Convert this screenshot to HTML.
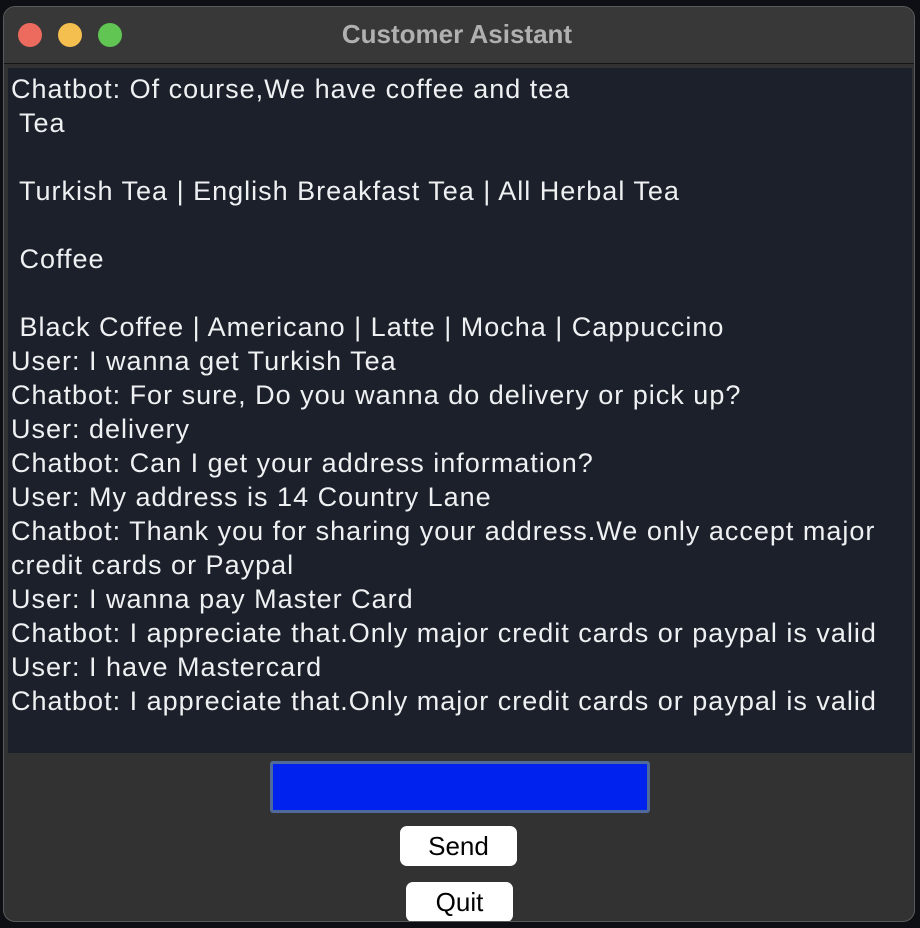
<!DOCTYPE html>
<html><head><style>
html,body{margin:0;padding:0;width:920px;height:928px;background:#0d0f14;overflow:hidden}
.win{position:absolute;left:3px;top:6px;width:912px;height:916px;background:#323232;border:1px solid #5a5a5a;border-radius:12px;overflow:hidden;box-sizing:border-box}
.tb{position:absolute;left:0;top:0;right:0;height:56px;background:#383838;border-bottom:1px solid #151515}
.dot{position:absolute;top:16px;width:24px;height:24px;border-radius:50%}
.title{position:absolute;left:0;right:0;top:12px;text-align:center;color:#b0b0b0;font:bold 26px "Liberation Sans",sans-serif;padding-right:4px}
.ta{position:absolute;left:4px;top:61px;width:904px;height:685px;background:#1b202a;color:#eef0f2;font:27px/34px "Liberation Sans",sans-serif;letter-spacing:1px;padding:4px 3px;box-sizing:border-box;white-space:pre}
.inp{position:absolute;left:266px;top:754px;width:380px;height:52px;background:#0022ef;border:3px solid #4f6a9a;border-radius:3px;box-sizing:border-box}
.btn{position:absolute;background:#fff;border-radius:7px;color:#000;font:26px/40px "Liberation Sans",sans-serif;text-align:center;height:40px}
</style></head><body>
<div class="win">
<div class="tb">
<div class="dot" style="left:14px;background:#ec6a5e"></div>
<div class="dot" style="left:54px;background:#f4bf4f"></div>
<div class="dot" style="left:94px;background:#61c554"></div>
<div class="title">Customer Asistant</div>
</div>
<div class="ta">Chatbot: Of course,We have coffee and tea
 Tea

 Turkish Tea | English Breakfast Tea | All Herbal Tea

 Coffee

 Black Coffee | Americano | Latte | Mocha | Cappuccino
User: I wanna get Turkish Tea
Chatbot: For sure, Do you wanna do delivery or pick up?
User: delivery
Chatbot: Can I get your address information?
User: My address is 14 Country Lane
Chatbot: Thank you for sharing your address.We only accept major
credit cards or Paypal
User: I wanna pay Master Card
Chatbot: I appreciate that.Only major credit cards or paypal is valid
User: I have Mastercard
Chatbot: I appreciate that.Only major credit cards or paypal is valid</div>
<div class="inp"></div>
<div class="btn" style="left:396px;top:819px;width:117px">Send</div>
<div class="btn" style="left:402px;top:875px;width:107px">Quit</div>
</div>
</body></html>
